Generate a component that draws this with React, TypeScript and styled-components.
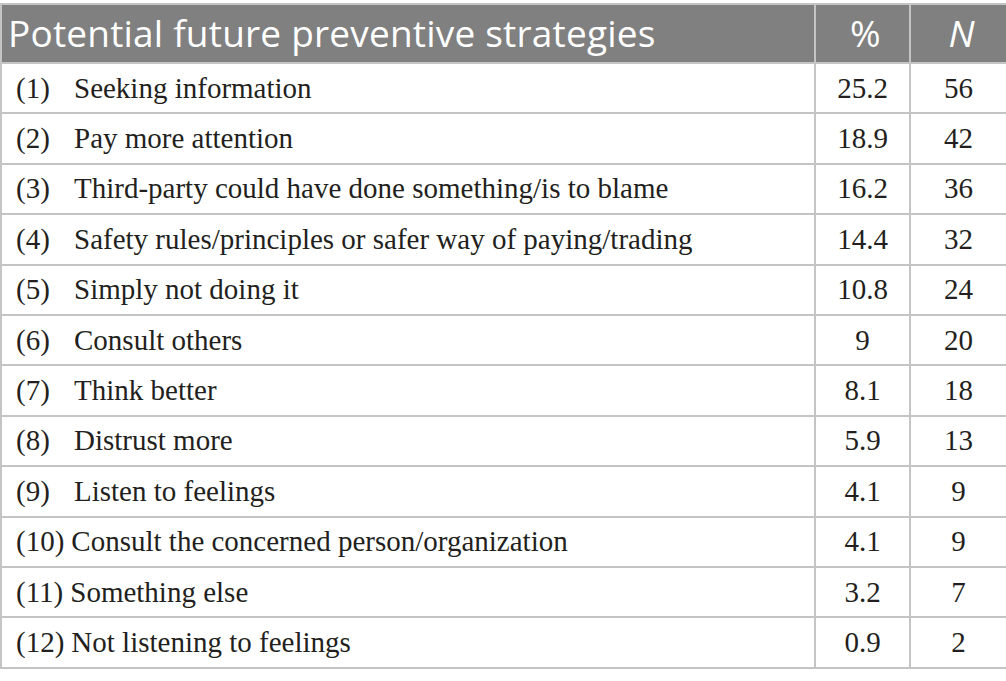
import React from 'react'
import styled, { createGlobalStyle } from 'styled-components'

const GlobalStyle = createGlobalStyle`
    html, body {
        margin: 0;
        padding: 0;
        background: #ffffff;
    }
`

const Page = styled.div`
    padding: 3px 0 0 0;
    width: 1006px;
`

const Table = styled.table`
    border-collapse: collapse;
    width: 1006px;
    table-layout: fixed;
    color: #231f20;
`

const HeadCell = styled.th<{ $align?: string; $italic?: boolean }>`
    background: #7f807f;
    color: #ffffff;
    font-family: "Open Sans", "Noto Sans", sans-serif;
    font-weight: 400;
    font-size: 37px;
    font-style: ${p => (p.$italic ? 'italic' : 'normal')};
    text-align: ${p => p.$align || 'left'};
    height: 55px;
    padding: 0 0 2px 6px;
    border: 2px solid #c4c4c4;
    letter-spacing: 0.2px;
    line-height: 1;
`

const Cell = styled.td<{ $center?: boolean }>`
    height: 48.4px;
    font-family: "Liberation Serif", "Times New Roman", serif;
    font-size: 29px;
    text-align: ${p => (p.$center ? 'center' : 'left')};
    padding: 0 0 0 ${p => (p.$center ? '0' : '14px')};
    border: 2px solid #c4c4c4;
    white-space: nowrap;
    line-height: 1;
`

const Num = styled.span<{ $wide?: boolean }>`
    display: inline-block;
    width: ${p => (p.$wide ? 'auto' : '58px')};
    margin-right: ${p => (p.$wide ? '7px' : '0')};
`

const rows: [string, string, string, string][] = [
    ['(1)', 'Seeking information', '25.2', '56'],
    ['(2)', 'Pay more attention', '18.9', '42'],
    ['(3)', 'Third-party could have done something/is to blame', '16.2', '36'],
    ['(4)', 'Safety rules/principles or safer way of paying/trading', '14.4', '32'],
    ['(5)', 'Simply not doing it', '10.8', '24'],
    ['(6)', 'Consult others', '9', '20'],
    ['(7)', 'Think better', '8.1', '18'],
    ['(8)', 'Distrust more', '5.9', '13'],
    ['(9)', 'Listen to feelings', '4.1', '9'],
    ['(10)', 'Consult the concerned person/organization', '4.1', '9'],
    ['(11)', 'Something else', '3.2', '7'],
    ['(12)', 'Not listening to feelings', '0.9', '2'],
]

function App() {
    return (
        <>
            <GlobalStyle />
            <Page>
                <Table>
                    <colgroup>
                        <col style={{ width: 814 }} />
                        <col style={{ width: 95 }} />
                        <col style={{ width: 97 }} />
                    </colgroup>
                    <thead>
                        <tr>
                            <HeadCell>Potential future preventive strategies</HeadCell>
                            <HeadCell $align="center">%</HeadCell>
                            <HeadCell $align="center" $italic>N</HeadCell>
                        </tr>
                    </thead>
                    <tbody>
                        {rows.map(([n, label, pct, count]) => (
                            <tr key={n}>
                                <Cell>
                                    <Num $wide={n.length > 3}>{n}</Num>
                                    {label}
                                </Cell>
                                <Cell $center>{pct}</Cell>
                                <Cell $center>{count}</Cell>
                            </tr>
                        ))}
                    </tbody>
                </Table>
            </Page>
        </>
    )
}

export default App
